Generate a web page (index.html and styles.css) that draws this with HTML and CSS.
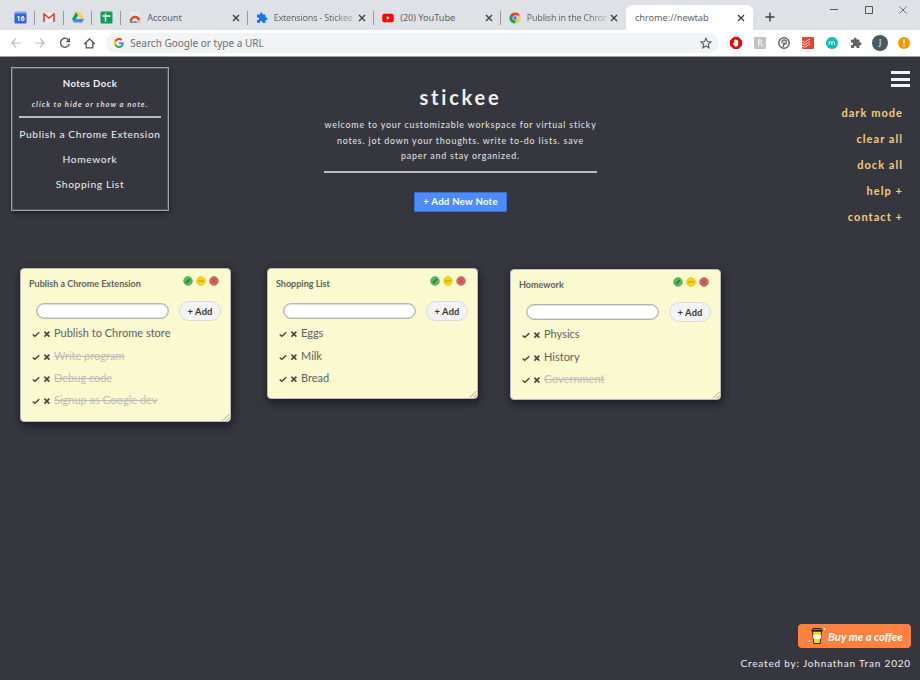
FILE: index.html
```html
<!DOCTYPE html>
<html lang="en">
<head>
<meta charset="utf-8">
<title>stickee</title>
<link rel="stylesheet" href="styles.css">
</head>
<body>
<svg class="defs" width="0" height="0">
  <symbol id="x" viewBox="0 0 8 8"><path d="M1 1l6 6M7 1L1 7" stroke="#3c4043" stroke-width="1.400"/></symbol>
  <symbol id="check" viewBox="0 0 8 8"><path d="M.7 4.400L2.800 6.300 7.300 2.200" fill="none" stroke="#444" stroke-width="1.400"/></symbol>
  <symbol id="cross" viewBox="0 0 8 8"><path d="M1.400 1.600l5 5M6.400 1.600l-5 5" stroke="#444" stroke-width="1.500"/></symbol>
  <symbol id="puzzle" viewBox="0 0 24 24"><path d="M20.500 11H19V7c0-1.100-.9-2-2-2h-4V3.500a2.500 2.500 0 0 0-5 0V5H4c-1.100 0-2 .9-2 2v3.800h1.500a2.700 2.700 0 0 1 0 5.400H2V20c0 1.100.9 2 2 2h3.800v-1.500a2.700 2.700 0 0 1 5.400 0V22H17c1.100 0 2-.9 2-2v-4h1.500a2.500 2.500 0 0 0 0-5z"/></symbol>
  <symbol id="edit" viewBox="0 0 10 10"><circle cx="5" cy="5" r="4.400" fill="#52bb5a" stroke="#43964a" stroke-width=".5"/><path d="M3 7l4-4" stroke="#29672f" stroke-width="1.300"/></symbol>
  <symbol id="min" viewBox="0 0 10 10"><circle cx="5" cy="5" r="4.400" fill="#fbd50b" stroke="#d8b513" stroke-width=".5"/><path d="M2 5h6" stroke="#a38a0b" stroke-width=".8"/></symbol>
  <symbol id="del" viewBox="0 0 10 10"><circle cx="5" cy="5" r="4.400" fill="#d66565" stroke="#b35353" stroke-width=".5"/><path d="M3 3l4 4M7 3L3 7" stroke="#963f40" stroke-width=".7"/></symbol>
  <symbol id="grip" viewBox="0 0 8 8"><path d="M1 7.500L7.500 1M4.500 7.500l3-3" stroke="#8d8d78" stroke-width=".8"/></symbol>
</svg>

<header class="browser">
  <div class="tabs">
    <div class="pin"><svg width="13" height="13" viewBox="0 0 13 13"><rect x=".5" y="1.500" width="12" height="11" rx="1" fill="#3367d6"/><path d="M1 .5h11v2H1z" fill="#8da5d8"/><text x="6.500" y="9.800" class="cal">16</text></svg></div>
    <div class="pin"><svg width="12" height="10" viewBox="0 0 12 10"><path d="M1 0h10v9H1z" fill="#f4f1f1"/><path d="M1 9V1l5 4 5-4v8" fill="none" stroke="#d93b30" stroke-width="1.600"/></svg></div>
    <div class="pin"><svg width="12" height="11" viewBox="0 0 12 11"><path d="M4 0h4l4 7H8z" fill="#ffcf3f"/><path d="M4 0l2 3.500L2 10.500 0 7z" fill="#11a15e"/><path d="M4 7h8l-2 3.500H2z" fill="#4688f4"/></svg></div>
    <div class="pin"><svg width="13" height="13" viewBox="0 0 13 13"><rect x=".5" y=".5" width="12" height="12" rx="1" fill="#0f9d58"/><path d="M5.500 2.500v8M2.500 5h8" stroke="#fff" stroke-width="1.500"/></svg></div>
    <div class="tab">
      <svg class="fav" width="12" height="12" viewBox="0 0 12 12"><path d="M1 0h10v11H1z" fill="#ebebed"/><path d="M2 9.500a4 4 0 0 1 8-1" fill="none" stroke="#e04436" stroke-width="2.600"/><path d="M1 11l1.500-4L4 11z" fill="#35a853"/><path d="M8 11l1-3 2 0v3z" fill="#fbc116"/><path d="M4 11a2 2 0 0 1 4 0z" fill="#4285f4"/></svg>
      <span class="label">Account</span><svg class="close"><use href="#x"/></svg></div>
    <div class="tab">
      <svg class="fav" width="12" height="12" fill="#1a73e8"><use href="#puzzle"/></svg>
      <span class="label fade tight">Extensions - Stickee</span><svg class="close"><use href="#x"/></svg></div>
    <div class="tab">
      <svg class="fav" width="12" height="12" viewBox="0 0 12 12"><rect x=".3" y="1.700" width="11.400" height="8.600" rx="2" fill="#f00"/><path d="M4.700 4v4L8 6z" fill="#fff"/></svg>
      <span class="label">(20) YouTube</span><svg class="close"><use href="#x"/></svg></div>
    <div class="tab last">
      <svg class="fav" width="12" height="12" viewBox="0 0 12 12"><circle cx="6" cy="6" r="5.500" fill="#ffcd40"/><path d="M1.200 3.300A5.500 5.500 0 0 1 11 3.500H6L3.800 7.200z" fill="#db4437"/><path d="M1.200 3.300A5.500 5.500 0 0 0 5.500 11.500L7.800 7.500H4z" fill="#0f9d58"/><circle cx="6" cy="6" r="2.500" fill="#fff"/><circle cx="6" cy="6" r="2" fill="#4285f4"/></svg>
      <span class="label fade tight">Publish in the Chror</span><svg class="close"><use href="#x"/></svg></div>
    <div class="tab active"><span class="label">chrome://newtab</span><svg class="close"><use href="#x"/></svg></div>
    <svg class="plus" width="10" height="10" viewBox="0 0 10 10"><path d="M5 .5v9M.5 5h9" stroke="#3c4043" stroke-width="1.500"/></svg>
    <div class="winctl">
      <svg width="8" height="8" viewBox="0 0 8 8"><path d="M0 3.500h8" stroke="#555"/></svg>
      <svg width="8" height="8" viewBox="0 0 8 8"><path d="M.5.5h7v7h-7z" fill="none" stroke="#555"/></svg>
      <svg width="8" height="8" viewBox="0 0 8 8"><path d="M.5.5l7 7M7.500.5l-7 7" stroke="#666" stroke-width=".9"/></svg>
    </div>
  </div>
  <div class="toolbar">
    <div class="nav"><svg width="10" height="10" viewBox="0 0 10 10"><path d="M9.700 5H1M5 .7L.8 5 5 9.300" fill="none" stroke="#b4b7ba" stroke-width="1.100"/></svg></div>
    <div class="nav"><svg width="10" height="10" viewBox="0 0 10 10"><path d="M.3 5H9M5 .7L9.200 5 5 9.300" fill="none" stroke="#b4b7ba" stroke-width="1.100"/></svg></div>
    <div class="nav"><svg width="12" height="12" viewBox="0 0 12 12"><path d="M10 3.600A4.500 4.500 0 1 0 10.400 7" fill="none" stroke="#54585c" stroke-width="1.400"/><path d="M11 .8v4.400H6.600z" fill="#54585c"/></svg></div>
    <div class="nav"><svg width="11" height="11" viewBox="0 0 11 11"><path d="M.8 5.500L5.500 1l4.700 4.500H8.800V9.800H2.200V5.500z" fill="none" stroke="#54585c" stroke-width="1.300"/></svg></div>
    <div class="omnibox">
      <svg width="10" height="10" viewBox="0 0 48 48"><path fill="#ea4335" d="M24 9.500c3.500 0 6.700 1.200 9.200 3.600l6.900-6.900C35.900 2.400 30.500 0 24 0 14.600 0 6.500 5.400 2.600 13.200l8 6.200C12.400 13.700 17.700 9.500 24 9.500z"/><path fill="#4285f4" d="M47 24.500c0-1.600-.2-3.100-.4-4.500H24v9h12.900c-.6 3-2.200 5.500-4.700 7.200l7.700 6c4.500-4.200 7.100-10.400 7.100-17.700z"/><path fill="#fbbc05" d="M10.500 28.600a14.500 14.500 0 0 1 0-9.200l-8-6.200a24 24 0 0 0 0 21.600z"/><path fill="#34a853" d="M24 48c6.500 0 11.900-2.100 15.900-5.800l-7.700-6c-2.200 1.500-4.900 2.300-8.200 2.300-6.300 0-11.600-4.200-13.500-9.900l-8 6.200C6.500 42.600 14.600 48 24 48z"/></svg>
      <span>Search Google or type a URL</span>
      <svg class="star" width="12" height="12" viewBox="0 0 24 24"><path d="M12 2.500l2.900 6.700 7.100.6-5.400 4.800 1.600 7.100-6.200-3.700-6.200 3.700 1.600-7.100L2 9.800l7.100-.6z" fill="none" stroke="#555a5e" stroke-width="2.200"/></svg>
    </div>
    <div class="exts">
      <svg viewBox="0 0 12 12"><path d="M3.600 0h4.800L12 3.600v4.800L8.400 12H3.600L0 8.400V3.600z" fill="#e30b13"/><path d="M3.500 5.500l.8.800V3h1v-.8h1V3h1v.6h.9V7c0 2-1 2.700-2.200 2.700-1.300 0-2.300-1.700-3-3.200z" fill="#fff"/></svg>
      <svg viewBox="0 0 12 12"><rect width="12" height="12" rx="1" fill="#c2c2c2"/><path d="M4.500 9.500V3l1.500-.8v3M4.500 6.200H7c.8 0 1 .4 1 1v2.300M7.500 3v1.500" fill="none" stroke="#fff" stroke-width=".9"/></svg>
      <svg viewBox="0 0 12 12"><circle cx="6" cy="6" r="5.200" fill="#fff" stroke="#666" stroke-width="1.500"/><path d="M5 10l1.300-5M4.300 6.500c-1-1.800 0-3.500 2-3.500 3.300 0 2.500 4.300.3 4.300-.7 0-1-.3-1-.7" fill="none" stroke="#666" stroke-width="1.300"/></svg>
      <svg viewBox="0 0 12 12"><rect width="12" height="12" rx="1" fill="#e44332"/><path d="M0 4l2.500 1.200L8 2M0 6.500l2.500 1.200L8 4.500M0 9l2.500 1.200L8 7" fill="none" stroke="#fff" stroke-width=".8"/></svg>
      <svg viewBox="0 0 12 12"><circle cx="6" cy="6" r="6" fill="#0dbdb8"/><path d="M3.200 8V4.600M3.200 6c0-1.800 2.700-1.800 2.700 0v2M5.900 6c0-1.800 2.800-1.800 2.800 0v2" fill="none" stroke="#fff"/></svg>
      <svg viewBox="0 0 12 12" fill="#5f6368"><use href="#puzzle" width="12" height="12"/></svg>
      <span class="avatar">J</span>
      <svg viewBox="0 0 12 12"><circle cx="6" cy="6" r="6" fill="#f29900"/><path d="M6 2.500v4.200M6 8v1.500" stroke="#fff" stroke-width="1.500"/></svg>
    </div>
  </div>
</header>

<main class="page">
  <div class="top">
    <aside class="dock">
      <h2>Notes Dock</h2>
      <p class="hint">click to hide or show a note.</p>
      <hr>
      <p>Publish a Chrome Extension</p>
      <p>Homework</p>
      <p>Shopping List</p>
    </aside>
    <section class="intro">
      <h1>stickee</h1>
      <p>welcome to your customizable workspace for virtual sticky<br>notes. jot down your thoughts. write to-do lists. save<br>paper and stay organized.</p>
      <hr>
      <button class="new">+ Add New Note</button>
    </section>
    <nav class="menu">
      <div class="burger"><i></i><i></i><i></i></div>
      <a>dark mode</a><a>clear all</a><a>dock all</a><a>help +</a><a>contact +</a>
    </nav>
  </div>

  <article class="note n1">
    <div class="head"><h3>Publish a Chrome Extension</h3><div class="dots"><svg><use href="#edit"/></svg><svg><use href="#min"/></svg><svg><use href="#del"/></svg></div></div>
    <div class="entry"><input type="text"><button>+ Add</button></div>
    <ul>
      <li><svg><use href="#check"/></svg><svg><use href="#cross"/></svg><span>Publish to Chrome store</span></li>
      <li><svg><use href="#check"/></svg><svg><use href="#cross"/></svg><s>Write program</s></li>
      <li><svg><use href="#check"/></svg><svg><use href="#cross"/></svg><s>Debug code</s></li>
      <li><svg><use href="#check"/></svg><svg><use href="#cross"/></svg><s>Signup as Google dev</s></li>
    </ul>
    <svg class="grip"><use href="#grip"/></svg>
  </article>
  <article class="note n2">
    <div class="head"><h3>Shopping List</h3><div class="dots"><svg><use href="#edit"/></svg><svg><use href="#min"/></svg><svg><use href="#del"/></svg></div></div>
    <div class="entry"><input type="text"><button>+ Add</button></div>
    <ul>
      <li><svg><use href="#check"/></svg><svg><use href="#cross"/></svg><span>Eggs</span></li>
      <li><svg><use href="#check"/></svg><svg><use href="#cross"/></svg><span>Milk</span></li>
      <li><svg><use href="#check"/></svg><svg><use href="#cross"/></svg><span>Bread</span></li>
    </ul>
    <svg class="grip"><use href="#grip"/></svg>
  </article>
  <article class="note n3">
    <div class="head"><h3>Homework</h3><div class="dots"><svg><use href="#edit"/></svg><svg><use href="#min"/></svg><svg><use href="#del"/></svg></div></div>
    <div class="entry"><input type="text"><button>+ Add</button></div>
    <ul>
      <li><svg><use href="#check"/></svg><svg><use href="#cross"/></svg><span>Physics</span></li>
      <li><svg><use href="#check"/></svg><svg><use href="#cross"/></svg><span>History</span></li>
      <li><svg><use href="#check"/></svg><svg><use href="#cross"/></svg><s>Government</s></li>
    </ul>
    <svg class="grip"><use href="#grip"/></svg>
  </article>

  <footer>
    <div class="coffee">
      <svg width="18" height="18" viewBox="0 0 18 18"><path d="M4.500 4h9l-1.300 12.500H5.800z" fill="#ffdd00" stroke="#2b2520"/><path d="M5 7.800h8.200l-.4 4H5.300z" fill="#fff"/><path d="M3.800 3.500L5 1.500h8l1.200 2z" fill="#777" stroke="#2b2520"/><path d="M3.500 4h11" stroke="#2b2520"/><circle cx="16.500" cy="2" r=".9" fill="#fff"/><circle cx="1.500" cy="14" r=".9" fill="#fff"/></svg>
      <span>Buy me a coffee</span>
    </div>
    <p>Created by: Johnathan Tran 2020</p>
  </footer>
</main>
</body>
</html>
```
FILE: styles.css
```css
* { box-sizing: border-box; }
body { margin: 0; width: 920px; height: 680px; overflow: hidden; background: #36363f; font-family: Lato, sans-serif; }
svg { display: block; flex: none; }
.defs { position: absolute; }
h1, h2, h3, p, ul { margin: 0; padding: 0; }

.browser { height: 57px; background: #fff; border-bottom: 1px solid #9b9da1; font-family: "Noto Sans", sans-serif; }
.tabs { display: flex; height: 30px; background: #dee1e6; padding-left: 6px; }
.pin { width: 28.800px; height: 30px; padding-top: 5px; display: flex; align-items: center; justify-content: center; background: linear-gradient(#95989c, #95989c) right 11px / 1px 14px no-repeat; }
.cal { fill: #fff; font: bold 7px Roboto, sans-serif; text-anchor: middle; }
.tab { width: 126.500px; padding: 5px 8px 0 8px; display: flex; align-items: center; background: linear-gradient(#95989c, #95989c) right 11px / 1px 14px no-repeat; }
.tab.last { background: none; width: 125.300px; padding-right: 8px; }
.fav { margin-right: 6px; }
.label { flex: 1; white-space: nowrap; font-size: 9.200px; line-height: 14px; color: #5f6368; letter-spacing: -.05px; }
.tight { font-size: 9px; letter-spacing: -.2px; }
.fade { color: transparent; margin-right: -2px; padding-right: 2px; background: linear-gradient(90deg, #5f6368 60px, rgba(95, 99, 104, .2) 82px); -webkit-background-clip: text; background-clip: text; }
.fade + .close { margin-left: 2px; }
.close { width: 8px; height: 8px; }
.active { height: 25px; margin-top: 5px; padding: 0 8px 0 9px; background: #fff; border-radius: 6px 6px 0 0; width: 127px; }
.plus { margin: 12px 0 0 12px; }
.winctl { display: flex; gap: 26.500px; margin: 6px 13px 0 auto; }
.toolbar { display: flex; align-items: center; height: 26px; padding-left: 4px; }
.nav { width: 24.300px; display: flex; justify-content: center; }
.omnibox { margin-left: 5px; width: 613px; height: 20px; border-radius: 10px; background: #f1f3f4; display: flex; align-items: center; padding: 0 7px 0 8px; font-size: 10px; color: #6b6f73; }
.omnibox span { margin-left: 6px; }
.star { margin-left: auto; }
.exts { display: flex; align-items: center; gap: 12px; margin-left: 11px; }
.exts svg { width: 12px; height: 12px; }
.avatar { width: 16px; height: 16px; margin: 0 -2px; border-radius: 50%; background: #455a64; color: #fff; font-size: 8px; line-height: 16px; text-align: center; }

.page { position: relative; height: 623px; color: #f2f2f2; }
.top { display: grid; grid-template-columns: 158px 273px 120px; column-gap: 155px; padding: 10px 10px 0 11px; }
.dock { width: 158px; height: 144px; border: 1.500px solid #a2a2a4; outline: 1px solid #55555b; outline-offset: -2px; box-shadow: 1px 2px 4px #202027; padding: 9px 6px 0; text-align: center; }
.dock h2 { font-size: 9.600px; line-height: 14px; letter-spacing: .42px; }
hr { border: 0; height: 2px; background: #bcbcbe; margin: 0; }
.dock hr { margin: 6px 1px 9px; }
.dock p { font-size: 10.200px; line-height: 15px; letter-spacing: .64px; margin: 0 -3px 10px; white-space: nowrap; }
.dock .hint { font-size: 7.700px; line-height: 12px; font-style: italic; font-weight: 700; letter-spacing: .95px; margin: 7px -3px 0; color: #ddd; }
.intro { text-align: center; padding-top: 17px; }
.intro h1 { font-size: 20px; line-height: 26px; letter-spacing: 2.800px; font-weight: 700; }
.intro p { margin-top: 7px; font-size: 8.900px; line-height: 15.500px; letter-spacing: .8px; white-space: nowrap; color: #e6e6e6; }
.intro hr { margin: 7px 0 19px; }
.new { font: bold 9.600px/1 Lato, sans-serif; letter-spacing: .27px; width: 93px; height: 20px; padding: 0; border: 1px solid #356fd0; border-radius: 1px; background: #4c8dfb; color: #fff; display: block; margin: 0 auto; }
.menu { display: flex; flex-direction: column; align-items: flex-end; margin-left: 38px; width: 120px; padding-top: 4px; justify-self: start; }
.burger { display: grid; gap: 3.500px; margin-bottom: 13px; }
.burger i { width: 19px; height: 3px; background: #f4f4f4; }
.menu a { font-size: 11px; font-weight: 700; line-height: 26px; letter-spacing: 1.050px; color: #f5cb7e; margin-right: 7px; }

.note { position: absolute; width: 211px; border: 1px solid #b9b8bd; border-radius: 4px; background: #fbf9cf; color: #606060; box-shadow: 1px 3px 8px #18181d; padding: 7px 8px 0; }
.n1 { left: 20px; top: 211px; height: 153.500px; }
.n2 { left: 267px; top: 211px; height: 131px; }
.n3 { left: 510px; top: 212px; height: 131px; }
.head { display: flex; justify-content: space-between; margin-right: -1px; }
.head h3 { font-size: 9px; line-height: 16px; color: #606060; }
.dots { display: flex; gap: 3px; margin: -.5px 4px 0 0; }
.dots svg { width: 10px; height: 10px; }
.entry { display: flex; align-items: center; justify-content: space-between; margin: 9px 1px 0 0; padding-left: 7px; }
.entry input { width: 133px; height: 16px; border: 1.500px solid #b5b5b5; border-radius: 8px; background: #fff; box-shadow: inset 0 0 0 .5px #bbb; }
.entry button { width: 42px; height: 20px; padding: 0; border: 1px solid #dadada; border-radius: 10px; background: #f3f3f3; font: bold 9.300px Lato, sans-serif; letter-spacing: .15px; color: #333; }
.note ul { list-style: none; margin-top: 1px; padding-left: 3px; }
.note li { display: flex; align-items: center; height: 22.400px; font-size: 11px; line-height: 16px; }
.note li svg { width: 8px; height: 8px; margin-right: 3px; margin-top: 2px; }
.note li s { color: #bbb; }
.grip { position: absolute; right: 0; bottom: 0; width: 8px; height: 8px; }

footer { position: absolute; right: 9px; bottom: 9px; display: flex; flex-direction: column; align-items: flex-end; }
.coffee { display: flex; align-items: center; width: 113px; height: 24px; margin-bottom: 7px; padding-left: 10px; border-radius: 4px; background: #ff813f; white-space: nowrap; }
.coffee span { margin-left: 2px; font: italic bold 11.300px Lato, cursive; color: #fff; }
footer p { font-size: 10px; line-height: 16px; letter-spacing: .82px; white-space: nowrap; }
```
